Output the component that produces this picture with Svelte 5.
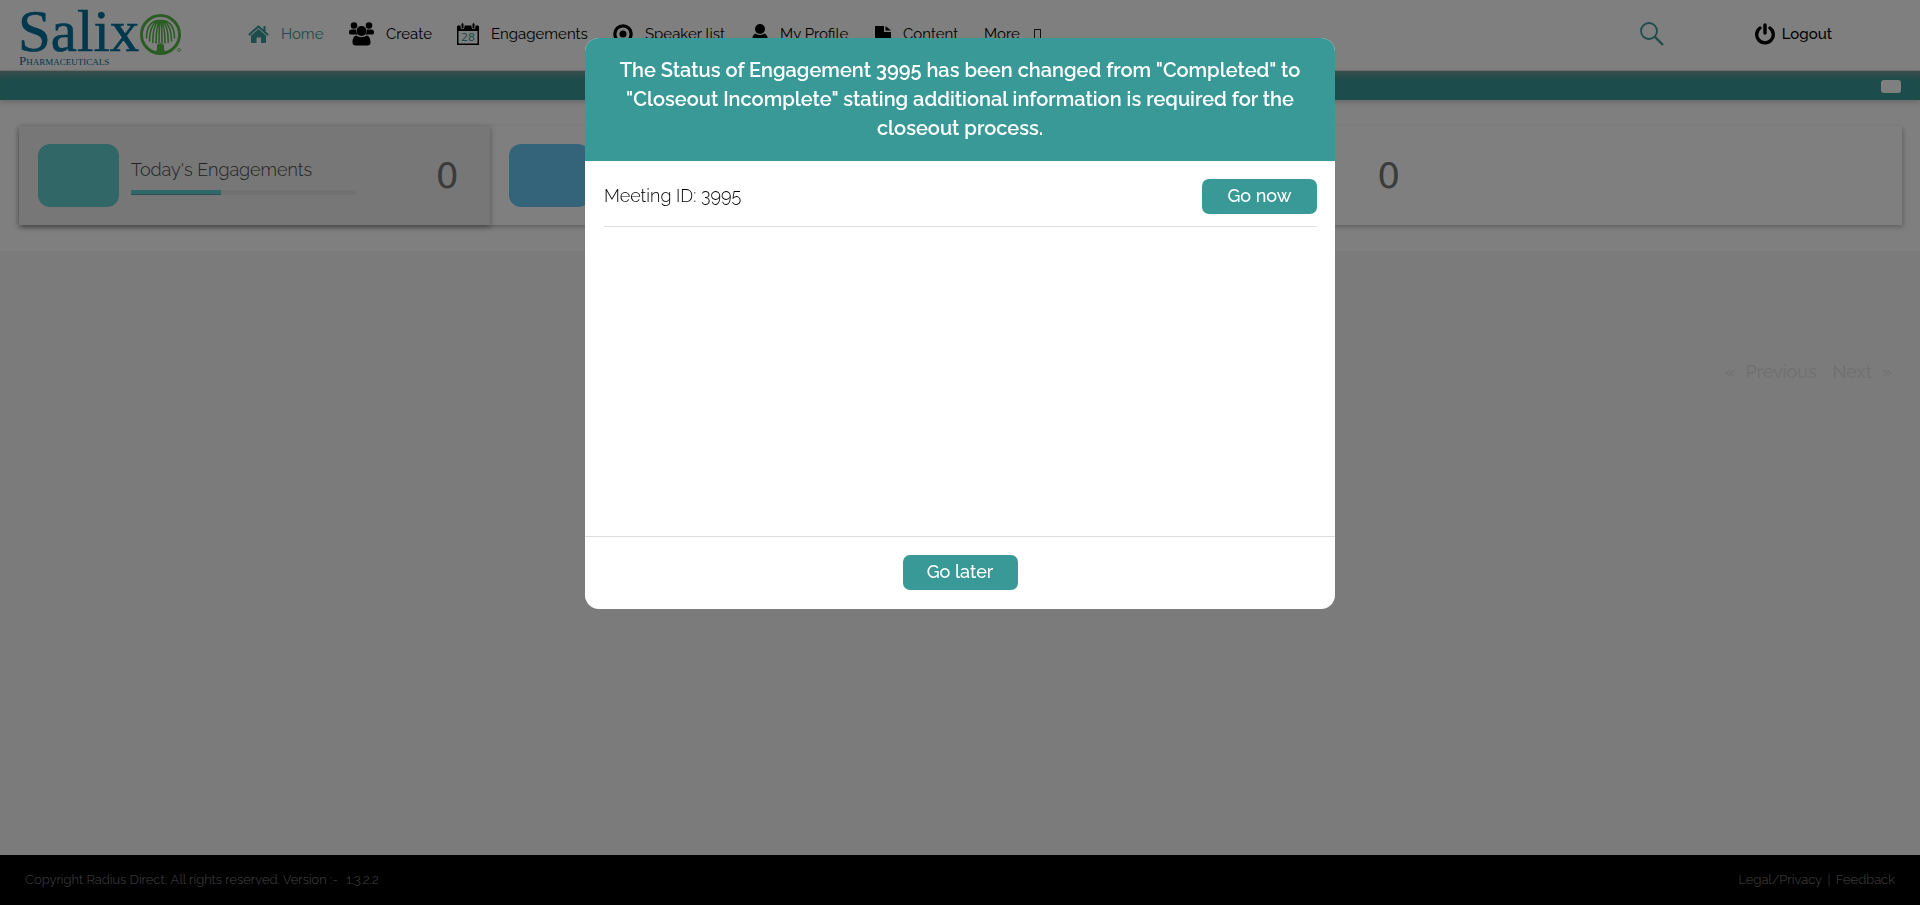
<script>
  const nav = [
    { label: 'Home', icon: 'home' },
    { label: 'Create', icon: 'group' },
    { label: 'Engagements', icon: 'calendar' },
    { label: 'Speaker list', icon: 'target' },
    { label: 'My Profile', icon: 'user' },
    { label: 'Content', icon: 'file' }
  ];
  const cards = [
    { title: "Today's Engagements", count: 0, color: '#62cfcd', progress: 40, active: true },
    { title: '', count: 0, color: '#69c9f5', progress: 40 },
    { title: '', count: 0, color: '#ffffff', progress: 0 }
  ];
  let open = $state(true);
</script>

<div class="page">
  <header>
    <a class="logo" href="#home" aria-label="Salix Pharmaceuticals">
      <svg width="166" height="68" viewBox="0 0 166 68">
        <g fill="#00719b" font-family="'Liberation Serif', serif">
          <text x="-1" y="51" font-size="59" stroke="#00719b" stroke-width=".6">Salix</text>
          <text x="0" y="65" font-size="13">P<tspan font-size="9">HARMACEUTICALS</tspan></text>
        </g>
        <g fill="none" stroke="#54b948">
          <circle cx="141.500" cy="34.500" r="19" stroke-width="3" />
          <path stroke-width="1.600" stroke-linecap="round" d="M141 20.500C133 20 127.500 26 127.500 38M141 20.500C135 21 130.500 28 130.500 41M141 20.500C137 22 133.800 29 133.800 42.500M141 20.500C139 23 137 30 137 43M141 20.500C140.500 24 140 32 140 43M142 20.500C150 20 155.500 26 155.500 38M142 20.500C148 21 152.500 28 152.500 41M142 20.500C146 22 149.200 29 149.200 42.500M142 20.500C144 23 146 30 146 43M142 20.500C142.500 24 143 32 143 43" />
        </g>
        <path fill="#54b948" d="M138 45l1.500-1.500 1 1 1-2 1 2 1-1L145 45v4l1.500 4h-10l1.500-4z" />
        <circle cx="160" cy="50" r="1.500" fill="none" stroke="#54b948" stroke-width=".8" />
      </svg>
    </a>

    <nav>
      {#each nav as item, i}
        <a href="#{item.icon}" class:current={i === 0}>
          {#if item.icon === 'home'}
            <svg width="21" height="18" viewBox="0 0 21 18" fill="currentColor"><path d="M10.500 4 18 10.500V17a1 1 0 0 1-1 1h-4v-5.500H8.500V18H4a1 1 0 0 1-1-1v-6.500z" /><path d="M.8 10 10.500 1.500 20.200 10M16.500 1v5" fill="none" stroke="currentColor" stroke-width="2" /></svg>
          {:else if item.icon === 'group'}
            <svg width="25" height="24" viewBox="0 0 25 24" fill="currentColor"><circle cx="5" cy="3.500" r="3.300" /><circle cx="20" cy="3.500" r="3.300" /><path d="M2.500 7.500H7c0 2 .6 3.700 1.800 5H1.500C0 12.500 0 11 0 10c0-1.400 1-2.500 2.500-2.500zM22.500 7.500H18c0 2-.6 3.700-1.800 5h7.300c1.500 0 1.500-1.500 1.500-2.500 0-1.400-1-2.500-2.500-2.500z" /><circle cx="12.500" cy="9" r="5" /><path d="M7.500 13.500c3 2.200 7 2.200 10 0 3 .5 4 3.500 4 7 0 2-1 3-3 3h-12c-2 0-3-1-3-3 0-3.500 1-6.500 4-7z" /></svg>
          {:else if item.icon === 'calendar'}
            <svg width="22" height="24" viewBox="0 0 22 24"><path fill="currentColor" fill-rule="evenodd" d="M1 3.500h20q1 0 1 1V23H0V4.500q0-1 1-1zM1.500 9v12.500h19V9z" /><rect x="4" y=".7" width="3" height="6" rx="1.500" fill="currentColor" stroke="#fff" /><rect x="15" y=".7" width="3" height="6" rx="1.500" fill="currentColor" stroke="#fff" /><text x="11" y="19" text-anchor="middle" font-size="11" font-family="DejaVu Sans" fill="#399996">28</text></svg>
          {:else if item.icon === 'target'}
            <svg width="20" height="20" viewBox="0 0 20 20"><circle cx="10" cy="10" r="8.200" fill="none" stroke="currentColor" stroke-width="3.200" /><circle cx="10" cy="10" r="3.500" fill="currentColor" /></svg>
          {:else if item.icon === 'user'}
            <svg width="16" height="20" viewBox="0 0 16 20" fill="currentColor"><circle cx="8" cy="5" r="5" /><path d="M3.500 9.500q4.500 3 9 0Q16 11 16 17q0 2.500-2.500 2.500h-11Q0 19.500 0 17q0-6 3.500-7.500z" /></svg>
          {:else}
            <svg width="16" height="18" viewBox="0 0 16 18" fill="currentColor"><path d="M0 1h9v6h7v11H0z" /><path d="M10.500 1v4.500H16z" /></svg>
          {/if}
          <span>{item.label}</span>
        </a>
      {/each}
      <a href="#more" class="more">More <i></i></a>
    </nav>

    <button class="search" aria-label="Search">
      <svg width="24" height="24" viewBox="0 0 24 24" fill="none" stroke="#399996"><circle cx="9" cy="9" r="8" stroke-width="1.800" /><path d="m14.500 14.500 8.500 8.500" stroke-width="2.400" /></svg>
    </button>
    <button class="logout">
      <svg width="20" height="22" viewBox="0 0 20 22" fill="none" stroke="currentColor" stroke-width="3.400" stroke-linecap="round"><path d="M5 5a8.300 8.300 0 1 0 10 0M10 2v8" /></svg>
      Logout
    </button>
  </header>

  <div class="band"><span></span></div>

  <section class="summary">
    <div class="cards">
      {#each cards as c}
        <article class:active={c.active}>
          <div class="tile" style="background:{c.color}"></div>
          <div class="info">
            {#if c.title}
              <h2>{c.title}</h2>
              <div class="track"><div style="width:{c.progress}%"></div></div>
            {/if}
          </div>
          <strong>{c.count}</strong>
        </article>
      {/each}
    </div>
  </section>

  <main>
    <div class="pager">
      <a href="#prev"><span>«</span> Previous</a>
      <a href="#next">Next <span>»</span></a>
    </div>
  </main>

  <footer>
    <div>Copyright Radius Direct, All rights reserved. Version :- <span>1.3.2.2</span></div>
    <div><a href="#legal">Legal/Privacy</a> | <a href="#feedback">Feedback</a></div>
  </footer>
</div>

{#if open}
  <div class="overlay">
    <div class="modal" role="dialog" aria-modal="true" aria-labelledby="modal-title">
      <h1 id="modal-title">The Status of Engagement 3995 has been changed from "Completed" to "Closeout Incomplete" stating additional information is required for the closeout process.</h1>
      <div class="body">
        <div class="row">
          <span>Meeting ID: 3995</span>
          <button>Go now</button>
        </div>
      </div>
      <div class="actions"><button onclick={() => (open = false)}>Go later</button></div>
    </div>
  </div>
{/if}

<style>
  :global(body) {
    margin: 0;
    font-family: Raleway, Lato, sans-serif;
    color: #000;
  }
  * { box-sizing: border-box; }
  a { color: inherit; text-decoration: none; }
  button {
    border: 0;
    padding: 0;
    background: none;
    font: inherit;
    color: inherit;
    cursor: pointer;
  }
  .page {
    display: flex;
    flex-direction: column;
    min-height: 100vh;
    background: #f7f7f7;
  }
  header {
    display: flex;
    align-items: center;
    height: 71px;
    padding: 0 88px 2px 19px;
    background: #fff;
    font-size: 15px;
    line-height: 20px;
    border-bottom: 1px solid #e0e0e0;
  }
  .logo { display: flex; align-self: flex-start; width: 229px; }
  .logo svg { overflow: visible; }
  nav {
    display: grid;
    grid-template-columns: 101px 108px 156px 139px 123px 109px auto;
    align-items: center;
    height: 24px;
  }
  nav a { display: flex; align-items: center; gap: 12px; white-space: nowrap; }
  nav a svg { flex: none; }
  nav .current { color: #399996; }
  .more i { width: 7px; height: 11px; margin-left: 2px; border: 1px solid #222; }
  .search { display: flex; margin-left: auto; margin-right: 91px; }
  .logout { display: flex; align-items: center; gap: 7px; font-weight: 500; }
  .band {
    display: flex;
    justify-content: flex-end;
    align-items: center;
    height: 29px;
    padding: 2px 19px 0 0;
    background: #399996;
    box-shadow: inset 0 9px 8px -6px #8a9c9c, 0 2px 6px #ccc;
    position: relative;
  }
  .band span { width: 20px; height: 13px; border-radius: 3px; background: #fff; }
  .summary { padding: 26px 18px 26px 19px; background: #fff; }
  .cards {
    display: grid;
    grid-template-columns: repeat(4, 1fr);
    box-shadow: 1px 2px 5px rgba(0, 0, 0, 0.25);
  }
  article {
    display: flex;
    align-items: center;
    height: 99px;
    padding: 0 31px 0 19px;
  }
  article.active { background: #eee; box-shadow: 0 2px 6px rgba(0, 0, 0, 0.35); }
  .tile { width: 81px; height: 63px; border-radius: 12px; }
  .info { width: 225px; margin-left: 12px; }
  h2 { margin: 2px 0 8px; font-size: 18px; line-height: 24px; font-weight: 300; color: #444; white-space: nowrap; }
  .track { height: 5px; background: #e0e5e5; }
  .track div { height: 5px; background: #62cfcd; border-bottom: 1px solid #4fa5a3; }
  strong { margin-left: auto; font: 400 36px 'DejaVu Sans', sans-serif; color: #777; }
  main { flex: 1; padding: 109px 28px 0; }
  .pager {
    display: flex;
    justify-content: flex-end;
    gap: 16px;
    font-size: 18px;
    line-height: 24px;
    color: #e0e0e0;
  }
  .pager a { display: flex; gap: 10px; }
  footer {
    display: flex;
    justify-content: space-between;
    align-items: center;
    height: 50px;
    padding: 0 25px 2px;
    background: #000;
    color: #888;
    font-size: 13px;
    font-weight: 300;
  }
  footer span { margin-left: 5px; }
  footer a { margin: 0 2px; }
  footer a:first-child { margin-left: 0; }
  footer a:last-child { margin-right: 0; }
  .overlay {
    position: fixed;
    inset: 0;
    padding-top: 38px;
    background: rgba(0, 0, 0, 0.5);
  }
  .modal {
    width: 750px;
    max-width: 100%;
    margin: 0 auto;
    overflow: hidden;
    border-radius: 14px;
    background: #fff;
  }
  h1 {
    margin: 0;
    padding: 18px 28px;
    background: #399996;
    color: #fff;
    font-size: 20px;
    line-height: 29px;
    font-weight: 600;
    text-align: center;
  }
  .body { min-height: 375px; padding: 18px 18px 0 19px; }
  .row {
    display: flex;
    justify-content: space-between;
    align-items: center;
    padding-bottom: 12px;
    border-bottom: 1px solid #ddd;
    font-size: 18px;
    color: #222;
  }
  .row span { padding-bottom: 2px; font-weight: 300; color: #000; }
  .modal button {
    height: 35px;
    min-width: 115px;
    padding-bottom: 2px;
    border-radius: 7px;
    background: #399996;
    color: #fff;
    font-size: 18px;
    font-weight: 500;
  }
  .actions { padding: 18px 18px 19px; text-align: center; border-top: 1px solid #ddd; }
</style>
